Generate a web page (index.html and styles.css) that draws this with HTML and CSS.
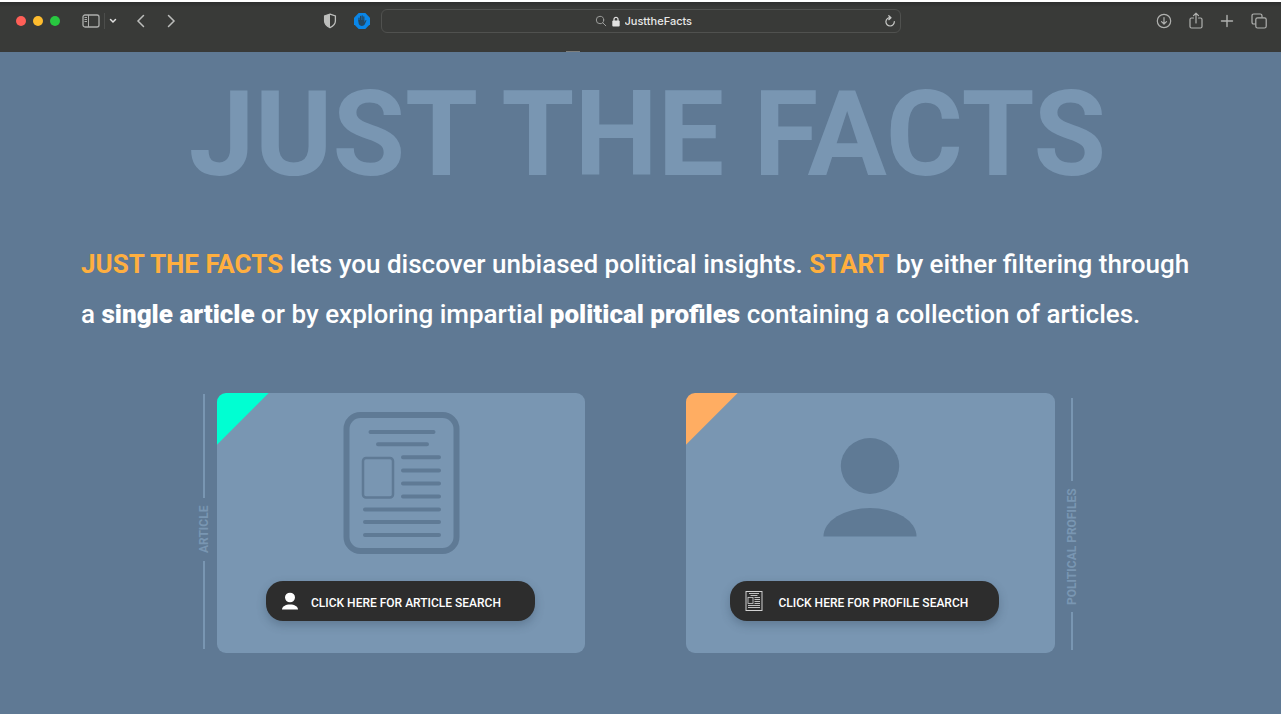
FILE: index.html
```html
<!DOCTYPE html>
<html lang="en">
<head>
<meta charset="utf-8">
<meta name="viewport" content="width=device-width, initial-scale=1">
<title>JusttheFacts</title>
<link rel="stylesheet" href="styles.css">
</head>
<body>
<header class="browser">
  <div class="browser-start">
    <div class="lights"><span class="light light-red"></span><span class="light light-yellow"></span><span class="light light-green"></span></div>
    <button class="tool" aria-label="Sidebar"><svg width="18" height="14" viewBox="0 0 18 14" fill="none" stroke="#adaeac"><rect x="1" y="1" width="16" height="12" rx="2" stroke-width="1.3"/><path d="M6.5 1v12M2.5 3.5h2.500M2.500 5.500h2.500M2.500 7.500h2.500"/></svg></button>
    <span class="divider"></span>
    <button class="tool" aria-label="Tab groups"><svg width="8" height="6" viewBox="0 0 8 6" fill="none" stroke="#e0e0df" stroke-width="1.500" stroke-linecap="round"><path d="M1.500 1.500 4 4l2.500-2.500"/></svg></button>
    <div class="history">
      <button class="tool" aria-label="Back"><svg width="10" height="14" viewBox="0 0 10 14" fill="none" stroke="#bcbdbb" stroke-width="1.500" stroke-linecap="round"><path d="M7.500 1.500 2 7l5.500 5.500"/></svg></button>
      <button class="tool" aria-label="Forward"><svg width="10" height="14" viewBox="0 0 10 14" fill="none" stroke="#bcbdbb" stroke-width="1.500" stroke-linecap="round"><path d="M2.500 1.500 8 7l-5.500 5.500"/></svg></button>
    </div>
    <div class="extensions">
      <button class="tool" aria-label="Privacy report"><svg width="14" height="16" viewBox="0 0 14 16"><path d="M7 1.200 12.400 3v5c0 3-2.200 5-5.400 6.600C3.800 13 1.600 11 1.600 8V3z" fill="none" stroke="#bdbebc" stroke-width="1.300"/><path d="M7 1 1.500 3v5c0 3 2.300 5 5.500 6.600z" fill="#bdbebc"/></svg></button>
      <button class="tool" aria-label="Content blocker"><svg width="18" height="18" viewBox="0 0 18 18"><path d="M5.700 1h6.600L17 5.700v6.600L12.300 17H5.700L1 12.300V5.700z" fill="#0a86e8"/><path d="M6 9V6M7.600 8V4.300M9.200 8V3.800M10.800 8V4.800" stroke="#24465f" stroke-width="1.200" stroke-linecap="round"/><path d="M5.400 8h6v2l1.300-1.900c.5-.3.900.1.700.7l-1.700 3.700c-.9 1.800-4.600 2.200-5.700-.2-.5-1-.6-2.300-.6-4.300z" fill="#24465f"/></svg></button>
    </div>
  </div>
  <div class="address">
    <label class="address-label" for="url"><svg width="12" height="12" viewBox="0 0 12 12" fill="none" stroke="#9c9d9b" stroke-linecap="round"><circle cx="5" cy="5" r="3.700"/><path d="m7.800 7.800 3 3"/></svg><svg width="8" height="11" viewBox="0 0 8 11"><path d="M2 5V3.300a2 2 0 0 1 4 0V5" fill="none" stroke="#e2e2e1" stroke-width="1.200"/><rect x=".3" y="4.600" width="7.400" height="6" rx="1" fill="#e2e2e1"/></svg></label>
    <input class="url" id="url" type="text" value="JusttheFacts" aria-label="Address">
    <button class="tool reload" aria-label="Reload"><svg width="12" height="12" viewBox="0 0 12 12" fill="none" stroke="#c8c9c7" stroke-width="1.200" stroke-linecap="round" stroke-linejoin="round"><path d="M6.500 2.600A4.200 4.200 0 1 0 10.300 6.500M4.800.700l2.200 2-2.200 2"/></svg></button>
  </div>
  <div class="browser-end">
    <button class="tool" aria-label="Downloads"><svg width="16" height="16" viewBox="0 0 16 16" fill="none" stroke="#b0b1af" stroke-width="1.200" stroke-linecap="round" stroke-linejoin="round"><circle cx="8" cy="8" r="6.700"/><path d="M8 4.500v6.500M5.500 8.600 8 11l2.500-2.400"/></svg></button>
    <button class="tool" aria-label="Share"><svg width="14" height="18" viewBox="0 0 14 18" fill="none" stroke="#b0b1af" stroke-width="1.200" stroke-linecap="round" stroke-linejoin="round"><path d="M4.500 6H2.500Q1 6 1 7.500v7Q1 16 2.500 16h9q1.500 0 1.500-1.500v-7Q13 6 11.500 6h-2M7 11V1.200M4.500 3.600 7 1.200l2.500 2.400"/></svg></button>
    <button class="tool" aria-label="New tab"><svg width="14" height="14" viewBox="0 0 14 14" stroke="#b0b1af" stroke-width="1.400" stroke-linecap="round"><path d="M7 1.500v11M1.500 7h11"/></svg></button>
    <button class="tool" aria-label="Tab overview"><svg width="16" height="16" viewBox="0 0 16 16" fill="none" stroke="#b0b1af" stroke-width="1.200"><rect x="4.800" y="4.800" width="10.400" height="10.200" rx="1.800"/><path d="M4.500 11H2.800Q1 11 1 9.200V2.800Q1 1 2.800 1h6.400Q11 1 11 2.800v1.700"/></svg></button>
  </div>
  <span class="tab-icon"></span>
</header>

<main class="page">
  <h1 class="title">JUST THE FACTS</h1>
  <p class="intro"><b class="accent">JUST THE FACTS</b> lets you discover unbiased political insights. <b class="accent">START</b> by either filtering through a <b class="strong">single article</b> or by exploring impartial <b class="strong">political profiles</b> containing a collection of articles.</p>
  <div class="cards">
    <section class="option">
      <h2 class="rail rail-article">ARTICLE</h2>
      <div class="card card-article">
        <svg class="art" width="118" height="142" viewBox="0 0 118 142" fill="none" stroke="#5f7a95" stroke-linecap="round"><rect x="4.500" y="3" width="110" height="136" rx="14" stroke-width="6"/><path d="M28.500 20h63M36 32.300h49M61 45.300h36M61 58.500h36M61 71.500h36M61 84.500h36M23 97.500h74M23 110h74M23 123h74" stroke-width="4"/><rect x="21" y="46" width="30" height="39.500" rx="3" stroke-width="2.500"/></svg>
        <button class="action"><svg width="18" height="18" viewBox="0 0 18 18" fill="#fff"><ellipse cx="9" cy="5.500" rx="5" ry="4.800"/><path d="M1 17.500c0-3 3.500-5 8-5s8 2 8 5z"/></svg><span class="action-text">CLICK HERE FOR ARTICLE SEARCH</span></button>
      </div>
    </section>
    <section class="option option-profile">
      <div class="card card-profile">
        <svg class="art" width="94" height="142" viewBox="0 0 94 142" fill="#5f7a95"><ellipse cx="47" cy="54" rx="29.200" ry="28"/><path d="M.500 124.500a46.500 28.500 0 0 1 93 0z"/></svg>
        <button class="action"><svg width="18" height="20" viewBox="0 0 18 20" fill="none" stroke="#d2d2d2"><rect x="1" y=".5" width="16" height="19"/><path d="M4 2.500h10M5.500 4.500h7M9.500 6.500H15M9.500 8.500H15M9.500 10.500H15M9.500 12.500H15M3 14.500h12M3 16.500h12" stroke-width=".9"/><rect x="3" y="6.500" width="5" height="6" stroke-width=".8"/></svg><span class="action-text">CLICK HERE FOR PROFILE SEARCH</span></button>
      </div>
      <h2 class="rail rail-profile">POLITICAL PROFILES</h2>
    </section>
  </div>
</main>
</body>
</html>
```
FILE: styles.css
```css
* { box-sizing: border-box; }

body {
  margin: 0;
  min-height: 100vh;
  background: #5f7994;
  font-family: Roboto, "Liberation Sans", sans-serif;
}

button { font: inherit; cursor: pointer; }
svg { display: block; flex: none; }

.browser {
  position: relative;
  display: grid;
  grid-template-columns: minmax(0, 1fr) minmax(0, 520px) minmax(0, 1fr);
  align-items: start;
  height: 52px;
  padding-top: 7px;
  border-top: 2px solid #fff;
  background: linear-gradient(#2d2e2e, #393a38 5px);
}

.browser-start, .browser-end {
  display: flex;
  align-items: center;
  height: 24px;
}
.browser-start { padding: 0 10px 0 16px; }
.browser-end { justify-content: flex-end; gap: 17px; padding-right: 14px; }
.lights { display: flex; gap: 7px; margin-right: 22px; }
.light { width: 10px; height: 10px; border-radius: 50%; }
.light-red { background: #ff5f57; }
.light-yellow { background: #febc2e; }
.light-green { background: #28c840; }
.tool { padding: 0; border: 0; background: none; }
.divider { width: 1px; height: 16px; margin: 0 4px; background: #4c4d4b; }
.history { display: flex; gap: 20px; margin-left: 19px; }
.extensions { display: flex; align-items: center; gap: 16px; margin-left: auto; }

/* Top edge of the page icon in the partly hidden tab strip */
.tab-icon {
  position: absolute;
  bottom: 0;
  left: calc(50% - 75px);
  width: 14px;
  height: 1px;
  background: #7d7e7c;
}

.address {
  display: flex;
  align-items: center;
  justify-content: center;
  position: relative;
  height: 24px;
  padding-left: 8px;
  border: 1px solid #50514f;
  border-radius: 6px;
}
.address-label { display: flex; align-items: center; gap: 5px; margin-right: 5px; }
.url {
  width: 70px;
  padding: 0;
  border: 0;
  background: none;
  color: #e8e8e7;
  font: 500 11px Inter, "Liberation Sans", sans-serif;
}
.reload { position: absolute; right: 4px; }

.page { padding: 24px 79px 56px 81px; }

.title {
  margin: 0;
  padding-left: 12px;
  color: #7996b2;
  font-size: 118px;
  font-weight: 700;
  line-height: 118px;
  text-align: center;
}

.intro {
  margin: 45px 0 0;
  color: #fff;
  font-size: 26px;
  font-weight: 500;
  line-height: 50px;
}
.accent { color: #ffaf3f; font-weight: 700; }
.strong { font-weight: 900; }

.cards {
  display: flex;
  justify-content: center;
  gap: 101px;
  margin-top: 54px;
  padding-right: 8px;
}
.option { display: flex; flex: 0 1 388px; gap: 6px; }
.option-profile { flex-basis: 393px; gap: 10px; }

.card {
  flex: 1;
  display: flex;
  flex-direction: column;
  align-items: center;
  min-width: 0;
  min-height: 260px;
  padding: 19px 0 32px;
  border-radius: 9px;
}
.card-article { background: linear-gradient(135deg, #00ffd2 36px, #7996b2 37px); }
.card-profile { background: linear-gradient(135deg, #ffad62 36px, #7996b2 37px); }

.action {
  display: flex;
  align-items: center;
  gap: 12px;
  width: 269px;
  max-width: 100%;
  height: 40px;
  margin-top: auto;
  padding: 0 15px;
  border: 0;
  border-radius: 17px;
  background: #2d2d2d;
  box-shadow: 0 4px 10px rgba(40, 60, 80, 0.3);
  color: #fff;
  font-size: 12px;
  font-weight: 500;
}
.action-text { padding-top: 3px; }
.card-profile .action { gap: 16px; margin-right: 12px; }

.rail {
  display: flex;
  align-items: center;
  width: 14px;
  margin: 0;
  writing-mode: vertical-rl;
  transform: rotate(180deg);
  color: #7996b2;
  font-size: 12px;
  font-weight: 700;
  line-height: 14px;
  white-space: nowrap;
}
.rail::before, .rail::after {
  content: "";
  width: 2px;
  background: #7996b2;
}
.rail-article { gap: 8px; padding: 4px 0 1px; }
.rail-article::before { height: 88px; }
.rail-article::after { flex: 1; }
.rail-profile { gap: 7px; padding: 3px 0 5px; }
.rail-profile::before { height: 38px; }
.rail-profile::after { flex: 1; }
```
